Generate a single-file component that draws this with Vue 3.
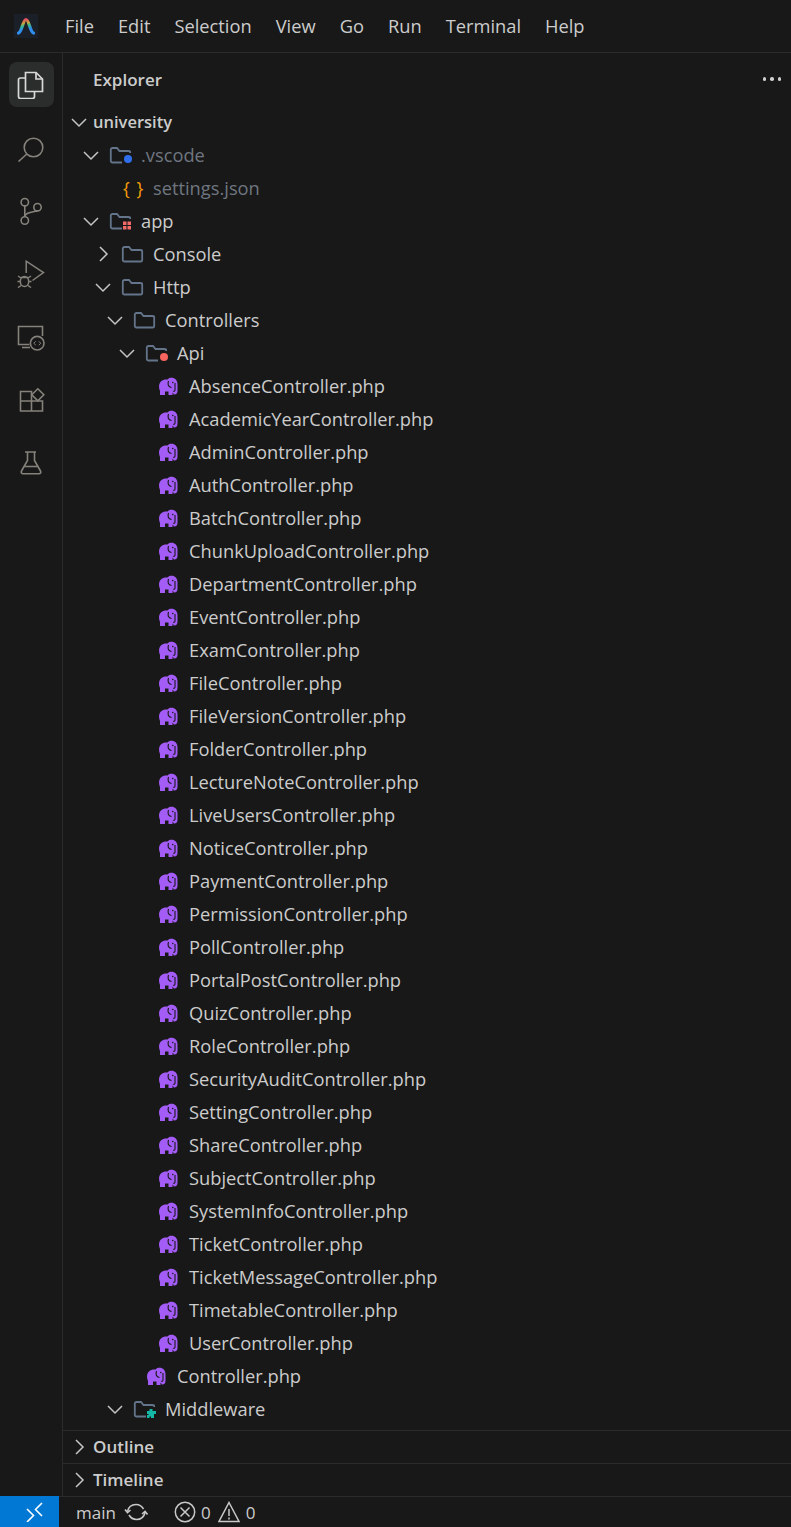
<script setup>
const controllers = [
  'Absence', 'AcademicYear', 'Admin', 'Auth', 'Batch', 'ChunkUpload', 'Department', 'Event', 'Exam',
  'File', 'FileVersion', 'Folder', 'LectureNote', 'LiveUsers', 'Notice', 'Payment', 'Permission',
  'Poll', 'PortalPost', 'Quiz', 'Role', 'SecurityAudit', 'Setting', 'Share', 'Subject', 'SystemInfo',
  'Ticket', 'TicketMessage', 'Timetable', 'User',
]

const rows = [
  { name: '.vscode', depth: 1, arrow: 'down', icon: 'folder', badge: 'blue', dim: true },
  { name: 'settings.json', depth: 2, icon: 'json', dim: true },
  { name: 'app', depth: 1, arrow: 'down', icon: 'folder', badge: 'grid' },
  { name: 'Console', depth: 2, arrow: 'right', icon: 'folder' },
  { name: 'Http', depth: 2, arrow: 'down', icon: 'folder' },
  { name: 'Controllers', depth: 3, arrow: 'down', icon: 'folder' },
  { name: 'Api', depth: 4, arrow: 'down', icon: 'folder', badge: 'red' },
  ...controllers.map((c) => ({ name: `${c}Controller.php`, depth: 5, icon: 'php' })),
  { name: 'Controller.php', depth: 4, icon: 'php' },
  { name: 'Middleware', depth: 3, arrow: 'down', icon: 'folder', badge: 'green' },
]

const menu = ['File', 'Edit', 'Selection', 'View', 'Go', 'Run', 'Terminal', 'Help']
</script>

<template>
  <div class="window">
    <header class="titlebar">
      <svg class="logo" width="24" height="24" viewBox="0 0 24 24">
        <defs>
          <linearGradient id="logoGrad" x1="0.3" y1="0" x2="0.5" y2="1">
            <stop offset="0.05" stop-color="#e2555f" />
            <stop offset="0.28" stop-color="#c9a43a" />
            <stop offset="0.48" stop-color="#35b98f" />
            <stop offset="0.72" stop-color="#2f8ff0" />
          </linearGradient>
        </defs>
        <rect width="24" height="24" fill="#1b1f27" />
        <path d="M4.500 19C8 18 9 5.500 12 5.500S16 18 19.500 19" fill="none" stroke="url(#logoGrad)" stroke-width="3.200" stroke-linecap="round" />
      </svg>
      <nav class="menu">
        <span v-for="m in menu" :key="m">{{ m }}</span>
      </nav>
    </header>

    <div class="main">
      <aside class="activity">
        <div class="act active">
          <svg width="28" height="28" viewBox="0 0 28 28" fill="none" stroke="#d8d8d8" stroke-width="1.700">
            <path d="M8.500 1.500H19l6.500 6.500v12.500H8.500z" />
            <path d="M19 1.500V8h6.500" />
            <path d="M8.500 7h-5c-1.200 0-2 .8-2 2v16.500c0 1.200.8 2 2 2h12c1.200 0 2-.8 2-2v-5" />
          </svg>
        </div>
        <div class="act">
          <svg width="28" height="28" viewBox="0 0 28 28" fill="none" stroke="#85817b" stroke-width="1.600">
            <circle cx="16.500" cy="13.500" r="9.300" />
            <path d="M9.800 20L1.500 27.500" />
          </svg>
        </div>
        <div class="act">
          <svg width="28" height="28" viewBox="0 0 28 28" fill="none" stroke="#85817b" stroke-width="1.600">
            <circle cx="7.800" cy="5.200" r="3.700" />
            <circle cx="7.800" cy="23.500" r="3.700" />
            <circle cx="20.500" cy="10.200" r="3.700" />
            <path d="M7.800 9v10.800M7.800 19.500c.4-3 3-3.500 6.500-4.300 2.800-.7 5.200-1 6.200-1.300" />
          </svg>
        </div>
        <div class="act">
          <svg width="28" height="28" viewBox="0 0 28 28" fill="none" stroke="#85817b" stroke-width="1.500">
            <path d="M9.200 13V1.200L26.500 12.500 15.500 20.500" />
            <ellipse cx="7.500" cy="21.500" rx="4.200" ry="5" />
            <path d="M3.300 21.500H.5M11.700 21.500h2.800M4 18l-3-2M11 18l3-2M4 25.500L1 27.500M11 25.500l3 2M3.800 17.500h7.400" />
          </svg>
        </div>
        <div class="act">
          <svg width="28" height="28" viewBox="0 0 28 28" fill="none" stroke="#85817b" stroke-width="1.600">
            <path d="M12.500 21.500H1.500v-18h24V13" />
            <path d="M5 24.500h8" />
            <circle cx="20.200" cy="20.200" r="6.800" />
            <path d="M18.800 18.300l-2 2 2 1.800M21.800 18.300l2 2-2 1.800" stroke-width="1" />
          </svg>
        </div>
        <div class="act">
          <svg width="28" height="28" viewBox="0 0 28 28" fill="none" stroke="#85817b" stroke-width="1.600">
            <path d="M3.500 5.500h11V25h-11zM3.500 15h22v10h-11" />
            <path d="M20.800 2.800l6 6-6 6-6-6z" />
          </svg>
        </div>
        <div class="act">
          <svg width="28" height="28" viewBox="0 0 28 28" fill="none" stroke="#85817b" stroke-width="1.600">
            <path d="M8 3h11M10.500 3v8.500L4.500 22c-.8 1.500 0 2.800 1.500 2.800h16c1.500 0 2.300-1.300 1.500-2.800L17.500 11.500V3" />
            <path d="M7.500 17.500h13" />
          </svg>
        </div>
      </aside>

      <section class="side">
        <div class="head">
          <span class="title">Explorer</span>
          <span class="dots"><i></i><i></i><i></i></span>
        </div>

        <div class="tree">
          <div class="row root">
            <svg class="chev" width="24" height="24" viewBox="0 0 24 24" fill="none" stroke="#c5c5c5" stroke-width="1.500"><path d="M5 9l7 7 7-7" /></svg>
            <span class="rootname">university</span>
          </div>

          <div v-for="r in rows" :key="r.name" class="row" :class="{ dim: r.dim }" :style="{ paddingLeft: 4 + r.depth * 12 + 'px' }">
            <span class="chevbox">
              <svg v-if="r.arrow === 'down'" width="24" height="24" viewBox="0 0 24 24" fill="none" stroke="#c5c5c5" stroke-width="1.500"><path d="M5 9l7 7 7-7" /></svg>
              <svg v-else-if="r.arrow === 'right'" width="24" height="24" viewBox="0 0 24 24" fill="none" stroke="#c5c5c5" stroke-width="1.500"><path d="M9 5l7 7-7 7" /></svg>
            </span>

            <span class="iconbox">
              <svg v-if="r.icon === 'folder'" width="24" height="24" viewBox="0 0 24 24" fill="none">
                <path d="M1.800 6.500C1.800 5.500 2.500 5 3.500 5H8l2.500 3h9c1 0 1.700.5 1.700 1.500V18c0 1-.7 1.500-1.700 1.500h-16c-1 0-1.700-.5-1.700-1.500z" stroke="#64748b" stroke-width="1.800" />
                <rect v-if="r.badge" x="13" y="10" width="11" height="14" fill="#181818" />
                <circle v-if="r.badge === 'blue'" cx="19" cy="16" r="4" fill="#2f6fed" />
                <circle v-if="r.badge === 'red'" cx="19" cy="16" r="4" fill="#f8645f" />
                <path v-if="r.badge === 'grid'" d="M14 12.500h3.500V16H14zM18.500 12.500H22V16h-3.500zM14 17h3.500v3.500H14zM18.500 17H22v3.500h-3.500z" fill="#f26a6a" />
                <path v-if="r.badge === 'green'" d="M16.500 12h3v2h3.500v3h-2v4h-3v-1.500h-1.500V21h-2.500v-3h1.500v-1h-1.500v-3h2.500z" fill="#14b8a6" />
              </svg>
              <span v-else-if="r.icon === 'json'" class="json">{ }</span>
              <svg v-else width="24" height="24" viewBox="0 0 24 24">
                <path d="M2 12.500C2 8 5.500 5.500 9 5.500h1.500c1-1.300 2.500-1.700 4-1.700 3.500 0 6 2.700 6 6.200v7c0 2.500-1.500 3.500-3 3.500-1 0-1.500-.7-1.200-1.500l-.8-.2V21h-4v-3.500H8V21H3v-4c-.7-1.500-1-3-1-4.500z" fill="#a35cf5" />
                <path d="M11.500 7c-1 3-.5 6 3 6.500M18 9v7c0 1.200-1.200 1.500-1.700 1" stroke="#181818" stroke-width="1.100" fill="none" />
                <circle cx="15.800" cy="8.500" r="0.800" fill="#181818" />
              </svg>
            </span>
            <span class="name">{{ r.name }}</span>
          </div>
        </div>

        <div class="section">
          <svg width="24" height="24" viewBox="0 0 24 24" fill="none" stroke="#c5c5c5" stroke-width="1.500"><path d="M9 5l7 7-7 7" /></svg>
          <span class="title">Outline</span>
        </div>
        <div class="section">
          <svg width="24" height="24" viewBox="0 0 24 24" fill="none" stroke="#c5c5c5" stroke-width="1.500"><path d="M9 5l7 7-7 7" /></svg>
          <span class="title">Timeline</span>
        </div>
      </section>
    </div>

    <footer class="status">
      <div class="remote">
        <svg width="20" height="20" viewBox="0 0 20 20" fill="none" stroke="#fff" stroke-width="1.600">
          <path d="M2 7l6.500 6.500L2 20M17 1l-6.500 6.500L17 14" />
        </svg>
      </div>
      <span class="branch">main</span>
      <svg class="sync" width="24" height="24" viewBox="0 0 24 24" fill="none" stroke="#c8c8c8" stroke-width="1.600">
        <path d="M3.500 11.500C4.500 7 8 4.500 12 4.500c3.500 0 6 2 7.500 4.500M21 12.500c-1 4.500-4.500 7-8.500 7-3.500 0-6-2-7.500-4.500" />
        <path d="M1 9.500l2.500 3 3-2.500M23.500 14.500l-2.500-3-3 2.500" />
      </svg>
      <svg class="err" width="22" height="22" viewBox="0 0 22 22" fill="none" stroke="#c8c8c8" stroke-width="1.500">
        <circle cx="11" cy="11" r="9.700" />
        <path d="M6.500 6.500l9 9M15.500 6.500l-9 9" />
      </svg>
      <span class="count">0</span>
      <svg class="warn" width="22" height="22" viewBox="0 0 22 22" fill="none" stroke="#c8c8c8" stroke-width="1.500">
        <path d="M11 1.500L21 20.500H1z" />
        <path d="M11 8v7M11 16.500v2" />
      </svg>
      <span class="count">0</span>
    </footer>
  </div>
</template>

<style>
html, body { background: #181818; }
</style>

<style scoped>
.window {
  width: 791px;
  height: 1527px;
  display: flex;
  flex-direction: column;
  background: #181818;
  color: #cccccc;
  font-family: "Open Sans", "Noto Sans", sans-serif;
  font-size: 18.300px;
  overflow: hidden;
}
.titlebar {
  height: 52px;
  flex: none;
  display: flex;
  align-items: center;
  padding-left: 14px;
  border-bottom: 1px solid #2b2b2b;
}
.menu { display: flex; gap: 24px; margin-left: 27px; padding-bottom: 2px; }

.main { flex: 1; display: flex; min-height: 0; }
.activity {
  width: 62px;
  flex: none;
  display: flex;
  flex-direction: column;
  align-items: center;
  gap: 18px;
  padding-top: 9px;
  border-right: 1px solid #2b2b2b;
}
.act {
  width: 45px;
  height: 45px;
  display: flex;
  align-items: center;
  justify-content: center;
  border-radius: 8px;
}
.act.active { background: #2b2c2c; }

.side { flex: 1; min-width: 0; display: flex; flex-direction: column; }
.head {
  height: 52px;
  flex: none;
  display: flex;
  align-items: center;
  justify-content: space-between;
  padding: 0 10px 0 30px;
}
.title { font-weight: 600; color: #cccccc; font-size: 17px; }
.dots { display: flex; gap: 4px; }
.dots i { width: 3.500px; height: 3.500px; border-radius: 50%; background: #d0d0d0; }

.tree { flex: 1; min-height: 0; overflow: hidden; }
.row {
  height: 33px;
  display: flex;
  align-items: center;
  white-space: nowrap;
}
.root { padding-left: 4px; }
.rootname { font-weight: 600; margin-left: 2px; font-size: 16.500px; }
.chev { flex: none; }
.chevbox { width: 24px; height: 24px; flex: none; }
.iconbox {
  width: 38px;
  height: 24px;
  flex: none;
  padding-left: 6px;
  box-sizing: border-box;
  display: flex;
  align-items: center;
}
.dim .name { color: #6f7680; }
.json { color: #f59e0b; font-size: 18px; font-weight: 400; margin-left: 2px; word-spacing: 2px; }

.section {
  height: 33px;
  flex: none;
  display: flex;
  align-items: center;
  gap: 2px;
  padding: 0 0 1px 4px;
  border-top: 1px solid #2b2b2b;
  box-sizing: border-box;
}

.status {
  height: 31px;
  flex: none;
  display: flex;
  align-items: center;
  border-top: 1px solid #2b2b2b;
  box-sizing: border-box;
  font-size: 17px;
}
.remote {
  width: 59px;
  align-self: stretch;
  background: #0078d4;
  display: flex;
  align-items: center;
  padding-left: 25px;
  box-sizing: border-box;
  margin-top: -1px;
}
.branch { margin-left: 17px; }
.sync { margin-left: 8px; }
.err { margin-left: 26px; }
.count { margin-left: 5px; }
.warn { margin-left: 7px; }
.warn + .count { margin-left: 6px; }
</style>
